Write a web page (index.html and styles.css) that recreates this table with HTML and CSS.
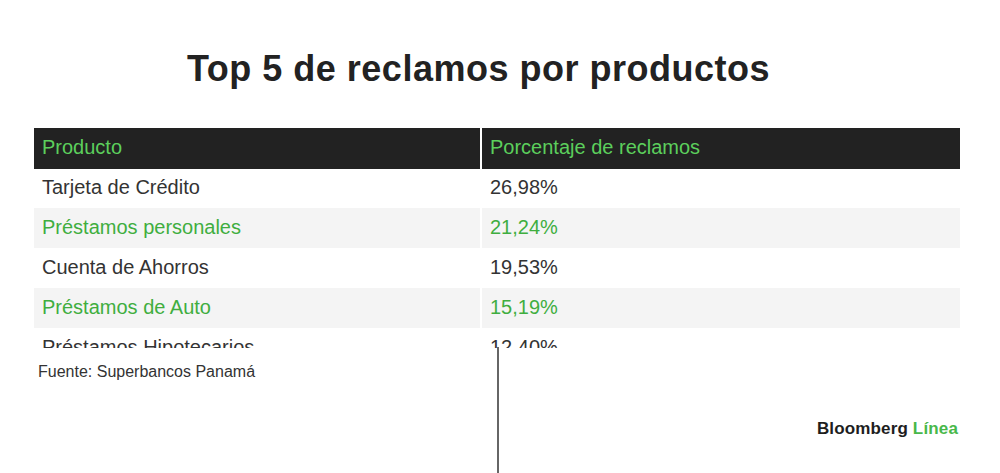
FILE: index.html
```html
<!DOCTYPE html>
<html lang="es">
<head>
<meta charset="utf-8">
<title>Top 5 de reclamos por productos</title>
<link rel="stylesheet" href="styles.css">
</head>
<body>
<div class="page">
  <h1 class="title">Top 5 de reclamos por productos</h1>
  <div class="table-view">
    <div class="table">
      <div class="cell head">Producto</div>
      <div class="cell head">Porcentaje de reclamos</div>
      <div class="cell">Tarjeta de Crédito</div>
      <div class="cell">26,98%</div>
      <div class="cell alt">Préstamos personales</div>
      <div class="cell alt">21,24%</div>
      <div class="cell">Cuenta de Ahorros</div>
      <div class="cell">19,53%</div>
      <div class="cell alt">Préstamos de Auto</div>
      <div class="cell alt">15,19%</div>
      <div class="cell">Préstamos Hipotecarios</div>
      <div class="cell">12,40%</div>
    </div>
  </div>
  <p class="source">Fuente: Superbancos Panamá</p>
  <div class="brand-row">
    <span class="brand">Bloomberg <span class="brand-accent">Línea</span></span>
  </div>
  <div class="stick"></div>
</div>
</body>
</html>
```
FILE: styles.css
```css
html, body {
  margin: 0;
  padding: 0;
  background: #ffffff;
}
body {
  font-family: "Liberation Sans", Arial, sans-serif;
  color: #2b2b2b;
}
.page {
  position: relative;
  width: 1000px;
  height: 473px;
  overflow: hidden;
  box-sizing: border-box;
  padding-left: 34px;
}
.title {
  margin: 51px 0 0 153px;
  font-size: 36px;
  line-height: 36px;
  font-weight: 700;
  letter-spacing: 0.5px;
  color: #222222;
}
.table-view {
  margin-top: 41px;
  width: 926px;
  height: 220px;
  overflow: hidden;
}
.table {
  display: grid;
  grid-template-columns: 446px 478px;
  column-gap: 2px;
  grid-auto-rows: 40px;
}
.cell {
  box-sizing: border-box;
  padding: 0 0 2px 8px;
  font-size: 20px;
  line-height: 38px;
  letter-spacing: 0;
  color: #333333;
  white-space: nowrap;
}
.cell.head {
  height: 41px;
  margin-bottom: -1px;
  background: #222222;
  color: #5ccf5c;
  line-height: 39px;
}
.cell.alt {
  background: #f4f4f4;
  color: #3fae3f;
}
.source {
  margin: 14px 0 0 4px;
  font-size: 16px;
  line-height: 20px;
  letter-spacing: 0;
  color: #333333;
}
.brand-row {
  display: flex;
  justify-content: flex-end;
  width: 924px;
  margin-top: 37px;
}
.brand {
  font-size: 17px;
  line-height: 20px;
  font-weight: 700;
  letter-spacing: 0.15px;
  color: #1e1e1e;
}
.brand-accent {
  color: #48b84a;
}
.stick {
  position: absolute;
  left: 497px;
  top: 347px;
  width: 2px;
  height: 130px;
  background: #666666;
}
```
